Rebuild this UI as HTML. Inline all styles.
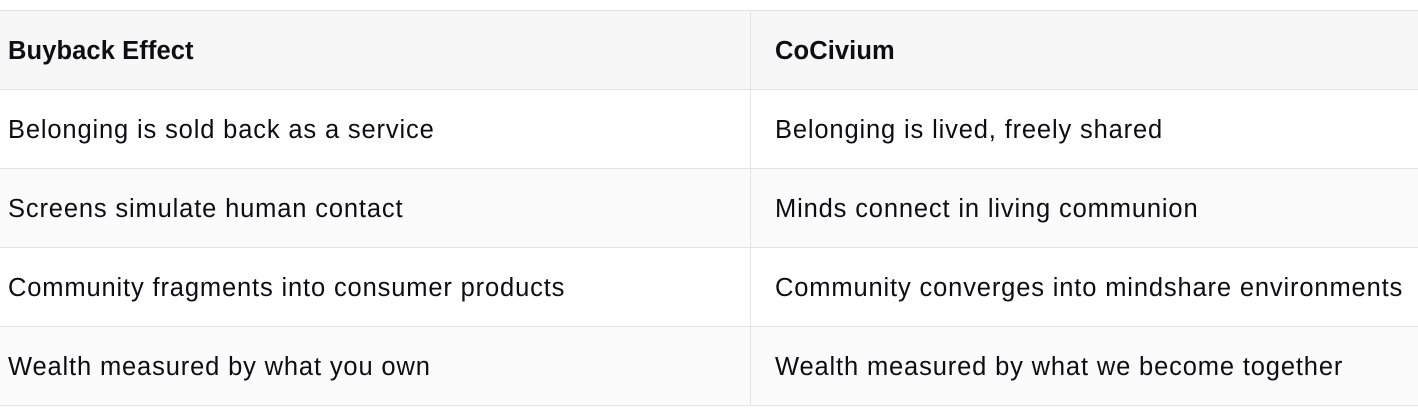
<!DOCTYPE html>
<html><head><style>
body{margin:0;background:#fff;width:1418px;height:414px;overflow:hidden;font-family:"Liberation Sans",sans-serif;color:#0d0d12;}
.t{position:absolute;top:10px;left:0;width:1418px;border-top:1px solid #e3e3e3;}
.r{display:flex;height:78px;border-bottom:1px solid #e3e3e3;}
.c{box-sizing:border-box;display:flex;align-items:center;padding-top:3px;font-size:25.5px;letter-spacing:0.85px;white-space:nowrap;}
.c1{width:751px;padding-left:8px;border-right:1px solid #e3e3e3;}
.c2{flex:1;padding-left:24px;}
.h{background:#f7f7f7;font-weight:bold;}
.h .c{letter-spacing:0.1px;}
.a{background:#fbfbfb;}
</style></head><body>
<div class="t">
<div class="r h"><div class="c c1">Buyback Effect</div><div class="c c2">CoCivium</div></div>
<div class="r"><div class="c c1">Belonging is sold back as a service</div><div class="c c2">Belonging is lived, freely shared</div></div>
<div class="r a"><div class="c c1">Screens simulate human contact</div><div class="c c2">Minds connect in living communion</div></div>
<div class="r"><div class="c c1">Community fragments into consumer products</div><div class="c c2">Community converges into mindshare environments</div></div>
<div class="r a"><div class="c c1">Wealth measured by what you own</div><div class="c c2">Wealth measured by what we become together</div></div>
</div>
</body></html>
